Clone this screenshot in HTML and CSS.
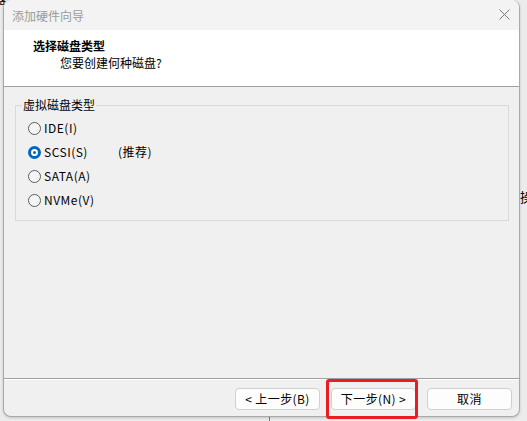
FILE: index.html
```html
<!DOCTYPE html>
<html lang="zh-CN">
<head>
<meta charset="utf-8">
<title>添加硬件向导</title>
<link rel="stylesheet" href="styles.css">
</head>
<body>
<div class="desk">
  <span class="bg-char bg-char-tl">器</span>
  <span class="bg-char bg-char-r">操</span>
  <span class="bg-line"></span>
  <div class="window">
    <div class="titlebar">
      <span class="title">添加硬件向导</span>
      <svg class="close" width="11" height="11" viewBox="0 0 11 11"><path d="M0.5 0.5 L10.5 10.5 M10.5 0.5 L0.5 10.5" stroke="#7a7a7a" stroke-width="1" fill="none"/></svg>
    </div>
    <div class="header">
      <div class="h-title">选择磁盘类型</div>
      <div class="h-desc">您要创建何种磁盘?</div>
    </div>
    <div class="content">
      <div class="group">
        <div class="legend">虚拟磁盘类型</div>
        <div class="radio-list">
          <div class="radio-row"><span class="radio"></span><span class="lbl">IDE(I)</span></div>
          <div class="radio-row"><span class="radio checked"></span><span class="lbl lbl-w">SCSI(S)</span><span class="lbl">(推荐)</span></div>
          <div class="radio-row"><span class="radio"></span><span class="lbl">SATA(A)</span></div>
          <div class="radio-row"><span class="radio"></span><span class="lbl">NVMe(V)</span></div>
        </div>
      </div>
    </div>
    <div class="footer">
      <button class="btn">&lt; 上一步(B)</button>
      <div class="hl-wrap">
        <button class="btn">下一步(N) &gt;</button>
        <span class="highlight"></span>
      </div>
      <button class="btn">取消</button>
    </div>
  </div>
</div>
</body>
</html>
```
FILE: styles.css
```css
html, body {
  margin: 0;
  padding: 0;
}
body {
  width: 527px;
  height: 421px;
  overflow: hidden;
  background: #ececec;
  font-family: "Noto Sans CJK SC", "Noto Sans", sans-serif;
  font-size: 12px;
  color: #000;
}
.desk {
  position: relative;
  width: 527px;
  height: 421px;
}
.bg-char {
  position: absolute;
  font-size: 13px;
  line-height: 14px;
  color: #000;
}
.bg-char-tl {
  left: -7px;
  top: -9px;
}
.bg-char-r {
  left: 520px;
  top: 190px;
}
.bg-line {
  position: absolute;
  left: 269px;
  top: 410px;
  width: 1px;
  height: 11px;
  background: #7a7a7a;
}
.window {
  position: relative;
  margin-left: 3px;
  width: 517px;
  height: 417px;
  box-sizing: border-box;
  border: 1px solid #a9a9a9;
  border-top: none;
  border-radius: 8px;
  background: #f0f0f0;
  display: flex;
  flex-direction: column;
  box-shadow: 0 1px 3px rgba(0,0,0,0.18);
}
.titlebar {
  height: 30px;
  flex: none;
  background: #f3f3f3;
  border-radius: 8px 8px 0 0;
  display: flex;
  align-items: center;
  justify-content: space-between;
  padding: 0 9px 0 8px;
}
.title {
  color: #9b9b9b;
  font-size: 12px;
  line-height: 16px;
  margin-top: 1px;
}
.close {
  display: block;
  margin-top: -1px;
}
.header {
  height: 57px;
  flex: none;
  box-sizing: border-box;
  background: #fff;
  border-bottom: 1px solid #a0a0a0;
  padding: 8px 0 0 29px;
}
.h-title {
  font-weight: bold;
  line-height: 16px;
}
.h-desc {
  line-height: 16px;
  margin-top: 1px;
  padding-left: 27px;
}
.content {
  flex: 1;
  padding: 18px 10px 0 11px;
}
.group {
  border: 1px solid #dadada;
  padding: 0 0 8px 12px;
}
.legend {
  width: fit-content;
  margin: -9px 0 0 -6px;
  padding: 0 1px;
  line-height: 16px;
  background: #f0f0f0;
}
.radio-list {
  margin-top: 3px;
  display: flex;
  flex-direction: column;
}
.radio-row {
  height: 24px;
  display: flex;
  align-items: center;
}
.radio {
  width: 13px;
  height: 13px;
  box-sizing: border-box;
  border: 1px solid #5c5c5c;
  border-radius: 50%;
  background: #f5f5f5;
  margin-right: 3px;
  flex: none;
  position: relative;
}
.radio.checked {
  border: none;
  background: #0067c0;
}
.radio.checked::after {
  content: "";
  position: absolute;
  left: 3px;
  top: 3px;
  width: 7px;
  height: 7px;
  box-sizing: border-box;
  border: 2px solid #fff;
  border-radius: 50%;
  background: #0067c0;
}
.lbl {
  line-height: 16px;
  letter-spacing: 0.5px;
}
.lbl-w {
  display: inline-block;
  width: 74px;
}
.footer {
  flex: none;
  height: 38px;
  box-sizing: border-box;
  border-top: 1px solid #a0a0a0;
  box-shadow: inset 0 1px 0 #ffffff;
  display: flex;
  justify-content: flex-end;
  align-items: flex-start;
  gap: 11px;
  padding: 9px 7px 0 0;
}
.btn {
  width: 85px;
  height: 22px;
  box-sizing: border-box;
  border: 1px solid #d0d0d0;
  border-radius: 4px;
  background: #fdfdfd;
  font-family: "Noto Sans CJK SC", "Noto Sans", sans-serif;
  font-size: 12px;
  line-height: 18px;
  letter-spacing: 0.4px;
  color: #000;
  padding: 0;
  margin: 0;
}
.hl-wrap {
  position: relative;
  display: flex;
}
.highlight {
  position: absolute;
  left: -5px;
  top: -9px;
  width: 92px;
  height: 40px;
  box-sizing: border-box;
  border: 3px solid #ec1c24;
  border-radius: 3px;
  pointer-events: none;
}
```
